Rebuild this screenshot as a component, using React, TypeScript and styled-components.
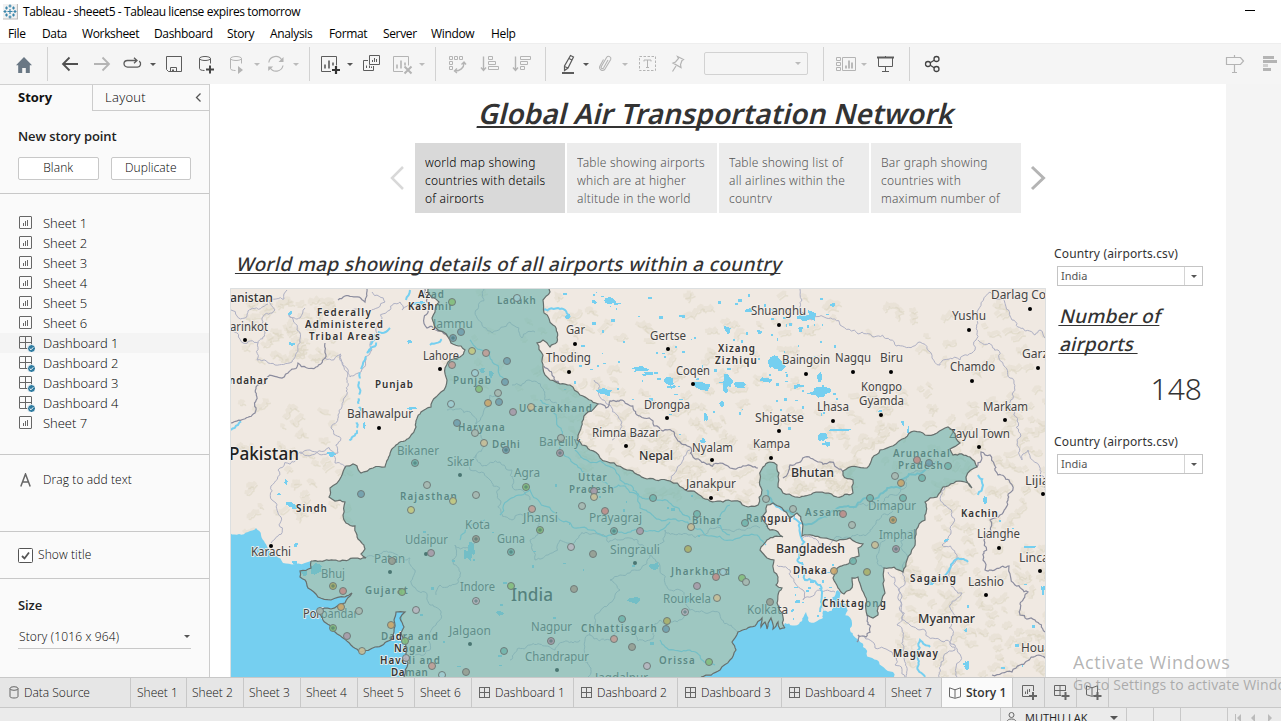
import React from "react";
import styled, { createGlobalStyle, css } from "styled-components";

const Global = createGlobalStyle`
  * { box-sizing: border-box; }
  body { margin: 0; overflow: hidden; background: #fff; font-family: "Noto Sans", "Open Sans", sans-serif; }
  svg { display: block; flex: none; }
`;

const UI = `"Open Sans", "Noto Sans", sans-serif`;

/* ---------- window frame ---------- */
const Frame = styled.div`
  width: 1281px;
  height: 721px;
  display: flex;
  flex-direction: column;
  position: relative;
  overflow: hidden;
  color: #333;
`;
const TitleBar = styled.header`
  height: 24px;
  display: flex;
  align-items: center;
  padding: 0 26px 0 3px;
  gap: 5px;
  font: 12px/24px ${UI};
  letter-spacing: -0.4px;
  color: #000;
`;
const TitleText = styled.span`
  flex: 1;
`;
const Minimize = styled.span`
  width: 10px;
  height: 1px;
  background: #000;
  margin-top: -3px;
`;
const MenuBar = styled.nav`
  height: 19px;
  display: flex;
  padding-left: 8px;
  font: 12px/20px ${UI};
  color: #000;
`;
const MenuItem = styled.span<{ $w: number }>`
  width: ${(p) => p.$w}px;
  white-space: nowrap;
  letter-spacing: -0.35px;
`;
const Toolbar = styled.div`
  height: 41px;
  background: #f5f5f5;
  border-top: 1px solid #eee;
  display: flex;
  align-items: center;
`;
const Tool = styled.svg<{ $gap: number }>`
  margin-left: ${(p) => p.$gap}px;
  overflow: visible;
`;
const Divider = styled.span<{ $gap: number }>`
  width: 1px;
  height: 34px;
  background: #d2d2d2;
  margin-left: ${(p) => p.$gap}px;
`;
const Caret = styled.span<{ $gap?: number; $dim?: boolean; $size?: number }>`
  width: 0;
  height: 0;
  flex: none;
  border: ${(p) => p.$size ?? 3}px solid transparent;
  border-bottom: 0;
  border-top-color: ${(p) => (p.$dim ? "#bbb" : "#555")};
  margin-left: ${(p) => p.$gap ?? 0}px;
`;
const FitSelect = styled.span`
  width: 104px;
  height: 23px;
  margin-left: 20px;
  margin-top: -1px;
  border: 1px solid #d2d2d2;
  border-radius: 2px;
  display: flex;
  align-items: center;
  justify-content: flex-end;
  padding-right: 6px;
`;

/* ---------- side pane ---------- */
const Body = styled.div`
  height: 593px;
  display: flex;
`;
const Side = styled.aside`
  width: 210px;
  background: #fafafa;
  border-right: 1px solid #ccc;
  font-family: ${UI};
  font-weight: 300;
  color: #000;
`;
const SideTabs = styled.div`
  height: 27px;
  display: flex;
  border-top: 1px solid #d0d0d0;
`;
const SideTab = styled.div<{ $active?: boolean }>`
  width: ${(p) => (p.$active ? 92 : 117)}px;
  padding: 0 7px 0 ${(p) => (p.$active ? 18 : 12)}px;
  font-size: 13px;
  line-height: 25px;
  display: flex;
  align-items: center;
  justify-content: space-between;
  ${(p) =>
    p.$active
      ? css`
          font-weight: 700;
          color: #111;
          padding-bottom: 2px;
        `
      : css`
          border-left: 1px solid #ccc;
          border-bottom: 1px solid #ccc;
          letter-spacing: 0.3px;
        `}
`;
const Section = styled.section<{ $h: number; $last?: boolean }>`
  height: ${(p) => p.$h}px;
  border-bottom: ${(p) => (p.$last ? 0 : 1)}px solid #c8c8c8;
`;
const Heading = styled.h3<{ $top: number }>`
  margin: 0;
  padding: ${(p) => p.$top}px 0 0 18px;
  font-size: 13px;
  line-height: 18px;
  letter-spacing: -0.1px;
  font-weight: 600;
  color: #222;
`;
const Buttons = styled.div`
  display: flex;
  gap: 12px;
  padding: 12px 18px 0;
`;
const Button = styled.button`
  width: 81px;
  height: 23px;
  padding: 0 0 1px;
  background: #fff;
  border: 1px solid #c8c8c8;
  border-radius: 2px;
  font: 300 12px/18px ${UI};
  letter-spacing: 0.1px;
  color: #000;
`;
const SheetList = styled.div`
  padding-top: 19px;
`;
const SheetRow = styled.div<{ $hot?: boolean }>`
  height: 20px;
  padding-left: 19px;
  display: flex;
  align-items: center;
  gap: 8px;
  font-size: 13px;
  line-height: 20px;
  letter-spacing: -0.02px;
  background: ${(p) => (p.$hot ? "#f4f4f4" : "transparent")};
`;
const SideRow = styled.div<{ $top: number; $left: number; $gap: number }>`
  display: flex;
  align-items: center;
  padding: ${(p) => p.$top}px 0 0 ${(p) => p.$left}px;
  gap: ${(p) => p.$gap}px;
  font-size: 12px;
  line-height: 18px;
  letter-spacing: 0.1px;
`;
const SizeSelect = styled.div`
  width: 173px;
  height: 25px;
  margin: 10px 0 0 18px;
  padding: 0 1px 0 1px;
  border-bottom: 1px solid #c8c8c8;
  display: flex;
  align-items: center;
  justify-content: space-between;
  font-size: 12px;
  letter-spacing: 0.15px;
`;

/* ---------- story canvas ---------- */
const Story = styled.main`
  width: 1016px;
  background: #fff;
  padding-top: 12px;
  overflow: hidden;
`;
const Gutter = styled.div`
  flex: 1;
  background: #f4f4f4;
`;
const slanted = css`
  transform: skewX(-14deg);
  transform-origin: 0 75%;
  text-decoration: underline;
  text-decoration-skip-ink: none;
  white-space: pre;
`;
const StoryTitle = styled.h1`
  margin: 0 0 0 268px;
  width: 476px;
  height: 34px;
  font: 600 28px/34px "Noto Sans", sans-serif;
  letter-spacing: 0.15px;
  text-decoration-thickness: 2px;
  text-underline-offset: 2px;
  ${slanted}
`;
const Navigator = styled.div`
  height: 70px;
  margin-top: 13px;
  padding-left: 178px;
  display: flex;
  align-items: center;
  gap: 2px;
`;
const Arrow = styled.svg<{ $left: number; $right: number }>`
  margin: 0 ${(p) => p.$right}px 0 ${(p) => p.$left}px;
`;
const Point = styled.div<{ $active?: boolean }>`
  width: 150px;
  height: 70px;
  padding: 11px 8px 0 10px;
  background: ${(p) => (p.$active ? "#d9d9d9" : "#ececec")};
  color: ${(p) => (p.$active ? "#000" : "#555")};
`;
const Caption = styled.div`
  height: 49px;
  overflow: hidden;
  font-size: 12px;
  font-weight: 300;
  line-height: 18px;
  white-space: pre;
  letter-spacing: 0.22px;
`;
const Dash = styled.div`
  display: flex;
  margin-top: 32px;
`;
const MapColumn = styled.div`
  width: 816px;
  margin-left: 20px;
`;
const SheetTitle = styled.h2`
  margin: 0;
  padding: 6px 0 0 4px;
  height: 43px;
  font: 500 19px/26px "Noto Sans", sans-serif;
  letter-spacing: 0.35px;
  text-underline-offset: 2px;
  ${slanted}
`;
const FilterColumn = styled.div`
  width: 180px;
  padding-left: 8px;
`;
const FilterLabel = styled.div`
  font-size: 12px;
  line-height: 18px;
  letter-spacing: 0.15px;
  color: #333;
`;
const FilterBox = styled.div`
  width: 146px;
  height: 20px;
  margin: 3px 0 0 3px;
  border: 1px solid #c4c4c4;
  display: flex;
  align-items: center;
  font-size: 11px;
  color: #555;
  padding-left: 3px;
`;
const FilterValue = styled.span`
  flex: 1;
  line-height: 16px;
`;
const FilterDrop = styled.span`
  width: 18px;
  height: 18px;
  border-left: 1px solid #d4d4d4;
  display: flex;
  align-items: center;
  justify-content: center;
`;
const CountTitle = styled.h2`
  margin: 16px 0 0 5px;
  font: 500 19px/28px "Noto Sans", sans-serif;
  letter-spacing: 0.25px;
`;
const CountLine = styled.span`
  display: block;
  width: max-content;
  text-underline-offset: 2px;
  ${slanted}
`;
const Count = styled.div`
  width: 148px;
  margin-top: 12px;
  text-align: right;
  font: 300 30px/38px "Noto Sans", sans-serif;
  height: 63px;
`;

/* ---------- bottom bars ---------- */
const TabStrip = styled.div`
  height: 31px;
  background: #e6e6e6;
  border-top: 1px solid #c8c8c8;
  border-bottom: 1px solid #c8c8c8;
  display: flex;
  font: 300 12px/29px ${UI};
  color: #111;
`;
const BottomTab = styled.div<{ $w: number; $pad?: number; $active?: boolean }>`
  width: ${(p) => p.$w}px;
  padding-left: ${(p) => p.$pad ?? 7}px;
  border-right: 1px solid #c8c8c8;
  display: flex;
  align-items: center;
  gap: 5px;
  white-space: nowrap;
  background: ${(p) => (p.$active ? "#fafafa" : "transparent")};
  font-weight: ${(p) => (p.$active ? 600 : 300)};
  color: ${(p) => (p.$active ? "#333" : "inherit")};
`;
const Status = styled.footer`
  height: 13px;
  background: #ebebeb;
  display: flex;
  padding-left: 1000px;
  font: 11px/18px ${UI};
  color: #222;
  overflow: hidden;
`;
const StatusCell = styled.div<{ $w: number }>`
  width: ${(p) => p.$w}px;
  border-left: 1px solid #c8c8c8;
  height: 20px;
  display: flex;
  flex: none;
  align-items: center;
  padding-left: 5px;
  gap: 8px;
`;
const Watermark = styled.div`
  position: absolute;
  left: 1073px;
  top: 650px;
  width: 208px;
  overflow: hidden;
  white-space: nowrap;
  color: rgba(130, 130, 130, 0.6);
  font-family: ${UI};
`;
const MarkTitle = styled.div`
  font-size: 18px;
  line-height: 25px;
  letter-spacing: 0.6px;
`;
const MarkText = styled.div`
  font-size: 14px;
  line-height: 20px;
  letter-spacing: 0.15px;
`;

/* ---------- icons ---------- */
const DARK = "#5c5c5c";
const DIM = "#b4b4b4";

const SheetIcon = () => (
  <svg width="16" height="16" viewBox="0 0 16 16" fill="none" stroke="#666">
    <rect x="0.5" y="1.5" width="12" height="12" rx="0.5" />
    <path d="M4.5 11V8M6.5 11V6M8.5 11V5" />
  </svg>
);
const DashIcon = ({ check = false }: { check?: boolean }) => (
  <svg width="16" height="18" viewBox="0 0 16 18" fill="none" stroke="#666">
    <rect x="0.5" y="2.5" width="12" height="12" rx="0.5" />
    <path d="M6.5 2.5v12M0.5 8.5h12" />
    {check && (
      <>
        <circle cx="12.5" cy="14.5" r="4" fill="#2f7ba0" stroke="#fafafa" />
        <path d="M10.7 14.5l1.3 1.3 2.3-2.5" stroke="#fff" />
      </>
    )}
  </svg>
);
const TabDash = () => (
  <svg width="11" height="12" viewBox="0 0 11 12" fill="none" stroke="#666">
    <rect x="0.5" y="0.5" width="10" height="10" />
    <path d="M5.5 0.5v10M0.5 5.5h10" />
  </svg>
);
const Book = ({ plus = false }: { plus?: boolean }) => (
  <svg width={plus ? 17 : 12} height={plus ? 16 : 12} viewBox={plus ? "0 0 17 16" : "0 0 12 12"} fill="none" stroke="#666">
    <path d="M6 11.3L0.5 9.8V0.8L6 2.8L11.5 0.8V9.8ZM6 2.8v8" />
    {plus && <path d="M11.5 7v8M7.5 11h8" strokeWidth="2" />}
  </svg>
);
const Cylinder = ({ color }: { color: string }) => (
  <g fill="none" stroke={color}>
    <ellipse cx="6" cy="6.5" rx="5.5" ry="2" />
    <path d="M0.5 6.5v10c0 1.2 2 2 5 2M11.5 6.5v5" />
  </g>
);
const Bars = ({ color, children }: { color: string; children?: React.ReactNode }) => (
  <g fill="none" stroke={color}>
    <path d="M10 19.5H0.5V4.500h15v9" />
    <path d="M4 16.500v-4M8 16.500V8.500M12 13.500V10.500" strokeWidth="1.6" />
    {children}
  </g>
);

function TopTools() {
  return (
    <Toolbar>
      <Tool $gap={15} width="18" height="24">
        <path d="M1 13.2L9 5l8 8.2h-2.2V21h-4v-5H7.2v5h-4v-7.8z" fill="#697784" />
      </Tool>
      <Divider $gap={14} />
      <Tool $gap={14} width="16" height="24" fill="none" stroke="#505050" strokeWidth="1.800">
        <path d="M7.5 5.5L1 12l6.5 6.5M1 12h15" />
      </Tool>
      <Tool $gap={16} width="16" height="24" fill="none" stroke={DIM} strokeWidth="1.800">
        <path d="M8.5 5.5L15 12l-6.500 6.500M0 12h15" />
      </Tool>
      <Tool $gap={13} width="19" height="24" fill="none" stroke={DARK} strokeWidth="1.300">
        <path d="M13 8.500H4.500a3.500 3.300 0 0 0 0 6.600h10a3.300 3.300 0 0 0 1.700-6M11 5.800l3 2.700-3 2.700" />
      </Tool>
      <Caret $gap={8} />
      <Tool $gap={10} width="16" height="24" fill="none" stroke={DARK}>
        <path d="M0.500 4.500h15v15H2.500l-2-2zM4.500 19v-3.500h6V19" />
        <path d="M7 19.500v-2" strokeWidth="2" />
      </Tool>
      <Tool $gap={17} width="14" height="24">
        <Cylinder color={DARK} />
        <path d="M11 13.500v8M7 17.500h8" stroke="#444" strokeWidth="2" />
      </Tool>
      <Tool $gap={17} width="14" height="24">
        <Cylinder color={DIM} />
        <path d="M8 14l5 4-5 4z" fill={DIM} />
      </Tool>
      <Caret $gap={10} $dim />
      <Tool $gap={7} width="18" height="24" fill="none" stroke={DIM} strokeWidth="1.200">
        <path d="M1.800 10.500a7 7 0 0 1 13-2.500M16 13.500A7 7 0 0 1 3 15.500" />
        <path d="M16.500 5v5h-5zM1.200 19v-4.500h5z" fill={DIM} stroke="none" />
      </Tool>
      <Caret $gap={8} $dim />
      <Divider $gap={10} />
      <Tool $gap={11} width="20" height="24">
        <Bars color={DARK}>
          <path d="M15 14v8M11 18h8" stroke="#333" strokeWidth="2.200" />
        </Bars>
      </Tool>
      <Caret $gap={6} />
      <Tool $gap={10} width="18" height="24" fill="none" stroke={DARK}>
        <path d="M6.500 3.500h10v9h-10zM5 8.500H0.500v10h10V14M3.500 16v-2.500M6.500 16v-2.500M8.500 16v-1.500M9.500 10V8M11.500 10V6M13.500 10V7" />
      </Tool>
      <Tool $gap={12} width="20" height="24">
        <Bars color={DIM}>
          <path d="M11.500 14.500l7 7M18.500 14.500l-7 7" strokeWidth="2" />
        </Bars>
      </Tool>
      <Caret $gap={6} $dim />
      <Divider $gap={10} />
      <Tool $gap={13} width="18" height="24" fill="none" stroke={DIM}>
        <path d="M0.500 4.500h3v3h-3zM5.500 4.500h3v3h-3zM10.500 4.500h3v3h-3zM0.500 9.500h3v3h-3zM0.500 14.500h3v3h-3z" />
        <path d="M6 19c5 0 9-3 9-8M12.500 12.500l2.500-2.500 2 2.500M8 16.500L5.500 19 8 21" strokeWidth="1.400" />
      </Tool>
      <Tool $gap={14} width="18" height="24" fill="none" stroke={DIM}>
        <path d="M2.500 4.500v13M0 15.500l2.500 3 2.500-3" strokeWidth="1.400" />
        <path d="M7.500 4.500h4v3h-4zM7.500 9.500h7v3h-7zM7.500 14.500h10v3h-10z" />
      </Tool>
      <Tool $gap={14} width="18" height="24" fill="none" stroke={DIM}>
        <path d="M2.500 4.500v13M0 15.500l2.500 3 2.500-3" strokeWidth="1.400" />
        <path d="M7.500 4.500h10v3h-10zM7.500 9.500h7v3h-7zM7.500 14.500h4v3h-4z" />
      </Tool>
      <Divider $gap={14} />
      <Tool $gap={16} width="13" height="24" fill="none" stroke={DARK} strokeWidth="1.200">
        <path d="M8.500 3.500l3 1.500-5.500 11L2.500 18.500 2.500 14zM7 6.500l3 1.500M2.500 14.500l3.500 1.500" />
        <path d="M0 21h12" strokeWidth="2" />
      </Tool>
      <Caret $gap={8} />
      <Tool $gap={10} width="13" height="24" fill="none" stroke={DIM} strokeWidth="1.100">
        <path d="M9 8l-4.500 8a1.300 1.300 0 0 1-2.300-1.200l5.500-9.500a2.300 2.300 0 0 1 4 2.200l-6 10a3 3 0 0 1-5-3L4.500 7.500" />
      </Tool>
      <Caret $gap={10} $dim />
      <Tool $gap={11} width="18" height="24" fill="none" stroke={DIM}>
        <rect x="0.500" y="4.500" width="16" height="14" strokeDasharray="2.500 1.500" />
        <path d="M5 9.500V8h7v1.500M8.500 8v8M7 15.500h3" />
      </Tool>
      <Tool $gap={14} width="13" height="24" fill="none" stroke={DIM} strokeWidth="1.200">
        <path d="M6.500 4.500l6 3-1.500 1-1.500 4 .5 3-8-4.500 2.500-1 3-3.500zM5 14l-3.500 5.500" />
      </Tool>
      <FitSelect>
        <Caret $dim $size={3.5} />
      </FitSelect>
      <Divider $gap={15} />
      <Tool $gap={12} width="21" height="24" fill="none" stroke={DIM}>
        <path d="M0.500 5.500h4v3h-4zM0.500 10.500h4v3h-4zM0.500 15.500h4v3h-4zM6.500 5.500h13v13h-13z" />
        <path d="M10 16.500v-3M13 16.500V8.500M16 16.500v-6" strokeWidth="1.800" />
      </Tool>
      <Caret $gap={4} $dim />
      <Tool $gap={10} width="18" height="24" fill="none" stroke={DARK}>
        <path d="M0 5.500h17" strokeWidth="2" />
        <path d="M1.500 6v8.500h14V6M8.500 4v1M8.500 15v4M5 19.500h7" />
      </Tool>
      <Divider $gap={14} />
      <Tool $gap={15} width="16" height="24" fill="none" stroke="#444" strokeWidth="1.300">
        <circle cx="3" cy="12" r="2.500" />
        <circle cx="11.500" cy="7" r="2.500" />
        <circle cx="11.500" cy="17" r="2.500" />
        <path d="M5.200 10.700l4-2.400M5.200 13.300l4 2.400" />
      </Tool>
      <Tool $gap={285} width="19" height="24" fill="none" stroke={DIM} strokeWidth="1.200">
        <path d="M0.500 5.500h14l3 3.500-3 3.500h-14zM8.500 3v2.500M8.500 12.500v8M6 20.500h5" />
      </Tool>
      <Tool $gap={18} width="15" height="24" fill={DIM}>
        <path d="M0 4h11v3H0zM0 8h14v3H0zM0 16h8v3H0z" />
        <path d="M0 12h5v3H0z" fill="#d0d0d0" />
      </Tool>
    </Toolbar>
  );
}

/* ---------- map geometry ---------- */
type Pt = [number, number];
const parse = (s: string): Pt[] => s.trim().split(/\s+/).map((p) => p.split(",").map(Number) as Pt);
const noise = (a: number, b: number) => {
  const v = Math.sin(a * 12.9898 + b * 78.233) * 43758.5453;
  return v - Math.floor(v) - 0.5;
};
function rough(pts: Pt[], amount = 0.3, minLen = 4): Pt[] {
  const out: Pt[] = [pts[0]];
  const split = (a: Pt, b: Pt) => {
    const dx = b[0] - a[0];
    const dy = b[1] - a[1];
    const len = Math.hypot(dx, dy);
    if (len > minLen) {
      const k = noise(a[0] + b[0], a[1] + b[1]) * amount;
      const m: Pt = [(a[0] + b[0]) / 2 - dy * k, (a[1] + b[1]) / 2 + dx * k];
      split(a, m);
      split(m, b);
    } else out.push(b);
  };
  for (let i = 1; i < pts.length; i++) split(pts[i - 1], pts[i]);
  return out;
}
const line = (pts: Pt[]) => "M" + pts.map((p) => `${p[0].toFixed(1)} ${p[1].toFixed(1)}`).join("L");

const northwest = parse(
  "428,289 432,298 439,302 435,312 432,318 436,328 448,337 451,343 461,346 465,350 460,357 448,362 445,368 447,380 441,392 432,402 431,407 421,412 416,427 410,437 396,445 388,459 385,467 373,468 361,473 357,466 353,464 346,466 341,477 330,488 329,497 335,501 345,502 343,515 346,523 355,526 357,535 365,549 361,554 366,558 355,558 338,561 320,561 311,561"
);
const westCoast = parse(
  "311,561 311,568 300,571 300,577 305,580 308,588 318,597 331,600 345,597 352,593 345,603 331,609 318,610 323,620 335,632 353,647 361,652 375,647 391,640 394,632 394,620 396,612 405,612 400,618 404,627 401,633 406,647 405,657 408,663 404,677"
);
const eastCoast = parse(
  "701,677 720,670 730,660 736,650 732,642 738,632 755,626 762,618 761,627 765,622 767,629 771,618 773,629 778,622 780,629 785,628"
);
const northeast = parse(
  "785,628 783,617 777,603 782,588 776,585 778,577 774,572 774,560 767,558 760,550 767,540 783,537 778,532 770,530 767,525 762,517 767,505 773,503 782,508 790,518 797,513 802,522 802,536 823,538 850,538 863,544 858,548 859,556 850,562 835,572 833,578 838,588 844,594 850,590 852,578 858,577 862,590 867,615 873,618 878,615 878,607 885,593 884,568 903,572 907,560 914,547 916,530 925,520 925,502 937,497 943,487 965,482 972,488 966,477 977,467 970,457 953,455 950,449 960,443 948,427 937,433 925,435 914,431 905,438 880,450 867,468 843,471 843,475 853,480 853,493 837,497 813,493 795,497 783,493 778,487 779,473 777,465 770,462 763,467 760,480 762,490 758,505 745,506 723,502 703,498 683,488 670,481 647,479 627,470 600,458 590,450 582,445 577,440 582,422 588,412 598,404 580,395 570,385 560,384 550,380 543,368 543,355 537,343 543,340 550,347 557,342 553,325 544,313 543,300 550,292 549,289"
);
const nwR = rough(northwest);
const wcR = rough(westCoast, 0.2);
const ecR = rough(eastCoast, 0.2);
const neR = rough(northeast);
const indiaPath = line([...nwR, ...wcR, ...ecR, ...neR]) + "Z";
const arabianSea =
  line([...rough(parse("230,533 248,532 256,528 261,535 265,543 269,550 276,556 283,563 295,564 308,562 311,561")), ...wcR, [230, 677]]) + "Z";
const bengalSea =
  line([
    ...ecR,
    ...rough(
      parse("785,628 785,623 800,622 806,612 808,620 823,618 821,606 828,612 833,607 838,590 842,604 847,605 852,623 863,647 877,660 893,672 894,677"),
      0.5,
      3
    ),
  ]) + "Z";

const nationBorders = [
  "231,423 255,413 256,387 288,373 298,363 316,367 325,358 325,343",
  "338,300 365,302 367,289",
  "425,289 427,302 424,318 427,328 448,337",
  "598,404 606,408 610,401 622,400 640,416 654,426 663,431 672,431 678,441 690,447 694,458 705,463 720,463 730,468 745,466 758,468",
  "783,478 790,465 805,457 820,462 843,472",
  "766,527 776,520 790,518",
  "544,366 552,375 560,384",
  "977,467 981,452 990,455 998,475 1009,480 1008,500 1000,515 990,520 984,540 983,560 985,570 1009,566 1015,585 1028,592 1020,615 1035,620 1045,632",
  "867,615 866,637 858,635 857,642",
  "992,675 1012,672 1020,665 1045,658",
].map((s) => line(rough(parse(s), 0.45, 3)));
const stateBorders = [
  "230,330 243,343 258,343 265,333 262,318 275,310 270,300 284,299 287,290",
  "258,343 257,360 275,365 292,362 298,350 297,330 289,315 300,318 305,308",
  "231,310 245,318 252,308 268,304",
  "341,355 348,373 345,397 338,415 331,427 338,453 300,453",
  "328,452 310,450 278,470 276,503 281,517 271,543",
  "325,358 341,354 350,377 361,372 365,357 372,340 378,325 390,310 400,302 402,310 428,305",
  "352,310 370,312 385,302 372,292",
  "328,452 335,463 345,468",
  "800,289 802,300 800,312 812,320 840,325 858,334 890,340 920,342 932,358 940,365 960,360 975,350 976,340 978,310 990,292 1003,298 1012,320 1035,335 1040,330 1045,338",
  "978,340 998,350 1010,378 1014,410 1017,445 1022,460 1028,450 1045,490",
  "945,487 944,505 950,535 942,545 955,553 950,570 955,590 962,593 950,605 955,617 951,640 955,650 941,665 939,677",
  "917,530 903,572 899,590 901,610 910,625 925,630 940,640 955,645 957,677",
  "777,565 790,570 795,583 803,590 803,600 820,590 835,592",
  "888,572 900,600 897,625 903,650 906,677",
  "862,636 875,648 892,652 895,665 905,677",
  "484,289 476,310 482,325 492,333 510,322 522,338 535,332",
  "447,410 470,412 476,425 484,410 490,395 500,397",
  "478,425 483,445 476,455 482,466 500,462 512,470 515,490 530,500",
  "512,385 528,380 542,388 545,400 560,408 576,410",
  "476,455 470,470 490,480 500,500 512,520 530,512 540,520 530,540 535,560 548,555 560,540 575,542 600,535 620,540 640,545 650,555",
  "366,558 390,552 410,558 415,570 412,585 425,592 430,605 440,610 436,625 425,635 430,650 415,655",
  "476,540 455,545 452,560 460,575 440,585 436,595",
  "650,555 640,570 620,575 610,580 620,590 608,605 595,615 590,635 583,655 588,677",
  "650,555 660,570 680,590 690,610 720,615 738,632",
  "655,548 665,530 690,535 710,528 730,530 760,528",
  "590,635 610,640 630,632 650,640 660,620 690,610",
  "510,660 530,645 555,650 580,640",
  "853,508 880,505 905,488 940,460",
  "802,540 850,538 870,530 888,515 905,500",
  "884,568 880,545 890,535 915,530",
  "690,450 680,465 670,481",
  "594,380 610,405 620,430 612,440",
].map((s) => line(rough(parse(s), 0.5, 3)));
const rivers = [
  "380,335 370,350 360,370 359,400 357,433 348,443",
  "390,328 376,332 368,355",
  "406,300 410,290",
  "430,345 445,338",
  "231,430 238,425 243,421",
  "543,310 560,309 570,317",
  "797,560 805,580 820,585 820,612",
  "767,490 773,503 790,512 800,523 797,560",
  "800,523 840,507 870,498 900,488 925,470 940,463",
  "930,647 920,640 917,655 925,677",
  "942,580 955,560 968,562",
  "978,475 983,485 978,495",
].map((s) => line(rough(parse(s), 0.4, 3)));
const streams = [
  "540,400 560,450 600,480 640,508 690,525 730,540 766,545",
  "500,515 530,490 560,520 590,530 640,530 670,522",
  "460,540 470,525 485,520",
  "660,640 690,650 715,665",
  "470,340 490,352 505,380",
  "575,450 620,480 660,500 690,520",
  "730,505 715,520 730,535",
].map((s) => line(rough(parse(s), 0.4, 3)));
const mountains = [
  [240, 300, 330, 360, 60],
  [235, 400, 350, 530, 45],
  [560, 385, 720, 470, 60],
  [640, 440, 770, 500, 60],
  [780, 465, 850, 492, 40],
  [820, 390, 1045, 470, 90],
  [930, 480, 1045, 677, 120],
  [550, 295, 830, 440, 80],
  [895, 560, 915, 660, 25],
  [860, 300, 1045, 390, 35],
  [440, 290, 600, 400, 30],
];
const relief = mountains
  .flatMap(([x0, y0, x1, y1, n], g) =>
    Array.from({ length: n }, (_, i) => {
      const x = x0 + (noise(i, g + 1) + 0.5) * (x1 - x0);
      const y = y0 + (noise(i + 40, g + 7) + 0.5) * (y1 - y0);
      const dx = 4 + (noise(i, g + 3) + 0.5) * 9;
      const dy = (noise(i, g + 9) - 0.2) * 13;
      return line(rough([[x, y], [x + dx, y + dy]], 0.7, 3));
    })
  )
  .join("");

const lakes = [
  [640, 369, 12, 5], [648, 374, 8, 3], [605, 392, 12, 6], [668, 381, 9, 7], [672, 387, 7, 3],
  [703, 386, 14, 7], [728, 381, 8, 10], [725, 388, 5, 7], [740, 385, 13, 4], [611, 301, 10, 5], [594, 302, 4, 3],
  [568, 316, 5, 4], [775, 362, 10, 10], [780, 367, 12, 5], [767, 380, 10, 4], [820, 392, 18, 9], [800, 386, 8, 3],
  [819, 377, 5, 7], [812, 315, 8, 8], [804, 318, 12, 4], [801, 329, 4, 6], [833, 305, 4, 3], [728, 330, 5, 6],
  [749, 310, 6, 4], [760, 332, 5, 3], [822, 438, 8, 7], [826, 444, 6, 4], [838, 430, 22, 2], [903, 423, 3, 4],
  [908, 430, 2, 5], [722, 404, 4, 5], [706, 417, 3, 6], [703, 441, 5, 5], [880, 411, 4, 1.5], [290, 313, 3, 3],
  [292, 344, 5, 3], [286, 482, 3, 6], [290, 504, 6, 4], [295, 507, 7, 4], [296, 545, 3, 4], [332, 454, 8, 4],
  [279, 494, 3, 2], [419, 304, 10, 4], [931, 583, 6, 4], [1043, 590, 3, 7], [1031, 547, 9, 2], [966, 630, 2, 3],
  [967, 665, 4, 8], [985, 500, 3, 6], [946, 540, 4, 3], [364, 426, 2, 6], [412, 408, 8, 3], [410, 342, 4, 3],
  [468, 555, 8, 8], [472, 548, 5, 10], [688, 600, 10, 5], [634, 600, 9, 5], [401, 621, 2, 9], [402, 668, 4, 5],
  [482, 370, 5, 5], [491, 374, 4, 6], [316, 569, 10, 8], [304, 572, 6, 6], [500, 613, 6, 4], [655, 566, 8, 5],
];
const speckZones = [
  [560, 292, 850, 400, 85],
  [770, 300, 800, 410, 20],
  [560, 400, 830, 440, 12],
  [790, 560, 835, 622, 26],
  [400, 480, 700, 670, 36],
  [270, 560, 300, 568, 8],
  [960, 520, 1045, 670, 10],
];
const specks = speckZones.flatMap(([x0, y0, x1, y1, n], g) =>
  Array.from({ length: n }, (_, i) => [
    x0 + (noise(i + 3, g + 21) + 0.5) * (x1 - x0),
    y0 + (noise(i + 11, g + 33) + 0.5) * (y1 - y0),
    1 + (noise(i, g + 50) + 0.5) * 3,
    1 + (noise(i + 5, g + 60) + 0.5) * 2,
  ])
);
const blob = ([x, y, w, h]: number[]) => {
  const pts: Pt[] = Array.from({ length: 11 }, (_, i) => {
    const a = (i / 11) * Math.PI * 2;
    const r = 0.35 + (noise(x + i, y) + 0.5) * 0.5;
    return [x + Math.cos(a) * w * r, y + Math.sin(a) * h * r];
  });
  return line(pts) + "Z";
};
const lakePath = lakes.map(blob).join("");
const speckPath = specks.map(([x, y, w, h]) => `M${x.toFixed(0)} ${y.toFixed(0)}h${w.toFixed(0)}v${h.toFixed(0)}h-${w.toFixed(0)}z`).join("");

/* text, left, baseline, width */
type L = [string, number, number, number];
const cities: L[] = [
  ["arinkot", 230, 331, 38], ["Jammu", 433, 328, 40], ["Lahore", 423, 360, 36],
  ["Bahawalpur", 347, 418, 66], ["Bikaner", 397, 455, 42], ["Sikar", 447, 466, 27], ["Bareilly", 539, 446, 41],
  ["Gar", 566, 334, 19], ["Thoding", 546, 362, 45], ["Gertse", 650, 340, 36], ["Coqen", 676, 375, 34],
  ["Drongpa", 644, 409, 46], ["Rimna Bazar", 592, 437, 68], ["Nyalam", 692, 452, 41], ["Shigatse", 755, 422, 49],
  ["Kampa", 753, 448, 37], ["Shuanghu", 751, 315, 55], ["Baingoin", 782, 364, 48], ["Nagqu", 835, 362, 36],
  ["Biru", 880, 362, 23], ["Kongpo", 861, 391, 41], ["Gyamda", 859, 405, 45], ["Lhasa", 817, 411, 32],
  ["Yushu", 952, 320, 34], ["Darlag County", 991, 299, 80], ["Garzê", 1022, 358, 33], ["Chamdo", 950, 371, 45],
  ["Markam", 983, 411, 45], ["Zayul Town", 949, 438, 61], ["Lijiang", 1025, 485, 40], ["Lianghe", 977, 538, 43],
  ["Lincang", 1019, 562, 45], ["Lashio", 968, 586, 36], ["Houayxay", 1021, 652, 55], ["Janakpur", 686, 488, 50],
  ["Karachi", 251, 556, 40], ["Bhuj", 321, 578, 24], ["Porbandar", 303, 618, 55], ["Patan", 374, 563, 31],
  ["Udaipur", 405, 544, 43], ["Kota", 465, 529, 25], ["Guna", 497, 543, 28], ["Agra", 514, 477, 26],
  ["Jhansi", 523, 522, 35], ["Prayagraj", 589, 522, 53], ["Singrauli", 610, 554, 50], ["Indore", 460, 591, 35],
  ["Jalgaon", 449, 635, 42], ["Nagpur", 531, 631, 41], ["Chandrapur", 525, 661, 64], ["Jagdalpur", 595, 682, 53],
  ["Rourkela", 663, 603, 48], ["Kolkata", 747, 614, 41], ["Dimapur", 868, 510, 48], ["Imphal", 879, 539, 37],
];
const states: L[] = [
  ["Federally", 317, 316, 55], ["Administered", 305, 328, 79], ["Tribal Areas", 309, 340, 72], ["Punjab", 375, 388, 39],
  ["ndahar", 229, 384, 40], ["Azad", 418, 298, 27], ["Kashmir", 408, 310, 46], ["Ladakh", 497, 304, 40],
  ["Punjab", 453, 384, 39], ["Haryana", 458, 431, 48], ["Delhi", 492, 448, 29], ["Uttarakhand", 519, 412, 74],
  ["Xizang", 718, 352, 38], ["Zizhiqu", 715, 364, 43], ["Sindh", 296, 512, 32], ["Rajasthan", 400, 500, 58],
  ["Gujarat", 365, 594, 44], ["Dadra and", 381, 640, 58], ["Nagar", 394, 652, 34], ["Haveli and", 380, 664, 61],
  ["Daman", 391, 676, 38], ["Uttar", 578, 481, 30], ["Pradesh", 569, 493, 46], ["Bihar", 692, 524, 30],
  ["Jharkhand", 671, 575, 60], ["Chhattisgarh", 581, 632, 77], ["Orissa", 659, 664, 37], ["Rangpur", 746, 522, 48],
  ["Assam", 805, 516, 38], ["Arunachal", 893, 457, 58], ["Pradesh", 898, 469, 46], ["Kachin", 961, 517, 38],
  ["Sagaing", 910, 582, 47], ["Magway", 893, 657, 46], ["Dhaka", 793, 574, 35], ["Chittagong", 822, 607, 65],
];
const countries: L[] = [
  ["anistan", 230, 302, 43], ["Nepal", 639, 460, 34], ["Bhutan", 791, 477, 43], ["Bangladesh", 776, 553, 69], ["Myanmar", 918, 623, 57],
];
const townDots = parse(
  "245,340 440,369 379,428 575,344 569,372 668,349 693,384 667,418 626,446 779,431 771,458 712,460 711,498 779,325 806,374 853,372 891,372 881,415 833,421 969,330 1030,309 1038,368 972,381 1005,420 979,447 1043,494 999,548 1040,571 986,595 271,546 460,475 390,572 426,554 635,563 470,644 557,670"
);

const tint: Record<string, string> = {
  g: "#84bd7c", b: "#719ead", t: "#71b4ac", y: "#c2c77f", p: "#bf9c96", l: "#9ecbd0", s: "#a6b7b0",
  o: "#c9a56b", n: "#c7bd97", m: "#a69aa9", w: "#b6b5bf", r: "#bd8d8a", k: "#969d92", v: "#a9ae69",
};
const airports =
  "452,302,g 461,332,b 453,338,b 472,351,y 486,353,p 452,365,p 475,373,l 479,389,g 498,393,s 499,402,b 488,403,o 505,382,b 507,361,b 451,404,l 457,423,b 475,433,s 484,443,n 506,450,b 517,298,l 513,412,m 531,407,n 561,438,s 560,453,m 415,463,t 361,494,b 427,485,s 476,495,s 453,501,y 411,510,y 476,539,k 431,553,m 392,561,k 333,586,v 343,591,r 402,592,g 476,601,w 341,607,o 359,611,s 416,610,w 391,625,o 333,628,g 347,636,m 362,651,n 405,641,g 406,658,w 432,666,p 466,672,k 442,675,l 504,651,t 526,487,g 532,509,p 594,491,m 594,497,n 582,506,s 605,511,r 653,498,t 697,514,t 691,527,n 540,530,g 614,531,t 640,531,m 511,552,t 571,547,w 593,554,k 688,549,v 716,577,r 723,572,l 742,578,g 746,582,s 697,586,m 511,586,g 574,589,k 717,598,n 685,612,w 622,619,t 667,621,v 666,629,b 770,602,k 614,639,p 632,647,k 647,666,w 709,662,g 551,641,m 745,523,t 766,499,s 793,509,s 895,476,s 917,460,r 929,463,b 948,466,t 922,478,t 901,483,o 870,498,t 903,498,t 843,514,r 852,525,s 893,520,o 875,545,n 896,549,m 867,572,v 834,571,o 853,561,t 320,611,s"
    .split(" ")
    .map((s) => s.split(","));
const busy = "506,450 560,453 415,463 476,539 333,586 476,601 333,628 526,487 540,530 614,531 511,552 551,641 685,612 896,549 893,520 453,338";

type Kind = "city" | "state" | "country" | "big";
const Label = styled.text<{ $kind: Kind }>`
  font-family: "Noto Sans", sans-serif;
  paint-order: stroke;
  stroke: rgba(245, 240, 235, 0.85);
  stroke-width: 2px;
  stroke-linejoin: round;
  ${(p) => p.$kind === "city" && "font-size: 12px; fill: #444;"}
  ${(p) => p.$kind === "state" && "font-size: 9.8px; font-weight: 600; fill: #333; letter-spacing: 1.2px;"}
  ${(p) => p.$kind === "country" && "font-size: 12.5px; font-weight: 500; fill: #333;"}
  ${(p) => p.$kind === "big" && "font-size: 17.5px; font-weight: 500; fill: #222;"}
`;
const Labels = ({ items, kind }: { items: L[]; kind: Kind }) => (
  <>
    {items.map(([t, x, y, w], i) => (
      <Label key={i} $kind={kind} x={x} y={y} textLength={w} lengthAdjust={kind === "state" ? "spacing" : "spacingAndGlyphs"}>
        {t}
      </Label>
    ))}
  </>
);

const AirportMap = () => (
  <svg width="816" height="389" viewBox="230 288 816 389">
    <rect x="230" y="288" width="816" height="389" fill="#f0e9e2" />
    <path d={relief} fill="none" stroke="#d9d2bb" strokeWidth="4" opacity="0.28" />
    <path d={relief} fill="none" stroke="#d3ccb4" strokeWidth="1.500" opacity="0.4" transform="translate(2 3)" />
    <path d={arabianSea} fill="#75cff0" />
    <path d={bengalSea} fill="#75cff0" />
    {stateBorders.map((d, i) => (
      <path key={i} d={d} fill="none" stroke="#aeb0c4" />
    ))}
    <g fill="none" stroke="#75cff0">
      {rivers.map((d, i) => (
        <path key={i} d={d} strokeWidth="2" strokeDasharray={i < 5 ? "14 4 6 3" : undefined} />
      ))}
      {streams.map((d, i) => (
        <path key={i} d={d} strokeWidth="1.200" />
      ))}
    </g>
    <path d={lakePath} fill="#75cff0" shapeRendering="crispEdges" />
    <path d={speckPath} fill="#75cff0" shapeRendering="crispEdges" />
    {nationBorders.map((d, i) => (
      <path key={i} d={d} fill="none" stroke="#8b8c9e" strokeWidth="1.200" />
    ))}
    {townDots.map(([x, y], i) => (
      <circle key={i} cx={x} cy={y} r="2" fill="#000" />
    ))}
    <Labels items={states} kind="state" />
    <Labels items={cities} kind="city" />
    <Labels items={countries} kind="country" />
    <Labels items={[["Pakistan", 229, 460, 70], ["India", 511, 601, 42]]} kind="big" />
    <path d={indiaPath} fill="#72b5af" fillOpacity="0.65" />
    <path d={line(nwR) + line([...wcR])} fill="none" stroke="#666f6d" strokeWidth="1.200" />
    <path d={line(ecR) + line(neR)} fill="none" stroke="#666f6d" strokeWidth="1.200" />
    {airports.map(([x, y, c], i) => (
      <circle key={i} cx={x} cy={y} r="3.500" fill={tint[c]} fillOpacity="0.9" stroke="#6f7d7b" />
    ))}
    {parse(busy).map(([x, y], i) => (
      <circle key={i} cx={x} cy={y} r="1.800" fill="#3f6b6b" opacity="0.55" />
    ))}
    <path d="M230.500 677V288.500H1045.500V677" fill="none" stroke="#dcdfe0" />
  </svg>
);

const Filter = () => (
  <>
    <FilterLabel>Country (airports.csv)</FilterLabel>
    <FilterBox>
      <FilterValue>India</FilterValue>
      <FilterDrop>
        <Caret $size={3.5} />
      </FilterDrop>
    </FilterBox>
  </>
);

const sheets = ["Sheet 1", "Sheet 2", "Sheet 3", "Sheet 4", "Sheet 5", "Sheet 6", "Dashboard 1", "Dashboard 2", "Dashboard 3", "Dashboard 4", "Sheet 7"];
const points = [
  "world map showing\ncountries with details\nof airports",
  "Table showing airports\nwhich are at higher\naltitude in the world",
  "Table showing list of\nall airlines within the\ncountry",
  "Bar graph showing\ncountries with\nmaximum number of",
];
const menus: [string, number][] = [
  ["File", 34], ["Data", 40], ["Worksheet", 72], ["Dashboard", 73], ["Story", 43], ["Analysis", 59],
  ["Format", 54], ["Server", 48], ["Window", 60], ["Help", 40],
];
const bottom: [string, number][] = [
  ["Sheet 1", 56], ["Sheet 2", 57], ["Sheet 3", 57], ["Sheet 4", 57], ["Sheet 5", 57], ["Sheet 6", 57],
  ["Dashboard 1", 102], ["Dashboard 2", 104], ["Dashboard 3", 104], ["Dashboard 4", 104], ["Sheet 7", 56],
];

export default function App() {
  return (
    <Frame>
      <Global />
      <TitleBar>
        <svg width="15" height="16" viewBox="0 0 15 16" stroke="#3a86ab" strokeWidth="1.200">
          <rect x="0" y="0" width="15" height="15" fill="#f1f1f1" stroke="none" />
          <path d="M0 15h14.500V0" stroke="#bbb" fill="none" />
          <path d="M7 5v5M4.500 7.500h5M7 0.500v3M5.500 2h3M7 11.500v3M5.500 13h3M2 6v3M0.500 7.500h3M12 6v3M10.500 7.500h3M3.500 2.500v3M2 4h3M10.500 2.500v3M9 4h3M3.500 9.500v3M2 11h3M10.500 9.500v3M9 11h3" />
        </svg>
        <TitleText>Tableau - sheeet5 - Tableau license expires tomorrow</TitleText>
        <Minimize />
      </TitleBar>
      <MenuBar>
        {menus.map(([m, w]) => (
          <MenuItem key={m} $w={w}>
            {m}
          </MenuItem>
        ))}
      </MenuBar>
      <TopTools />
      <Body>
        <Side>
          <SideTabs>
            <SideTab $active>Story</SideTab>
            <SideTab>
              Layout
              <svg width="7" height="10" fill="none" stroke="#555" strokeWidth="1.300">
                <path d="M5.500 0.500L1.500 4.500l4 4" />
              </svg>
            </SideTab>
          </SideTabs>
          <Section $h={83}>
            <Heading $top={16}>New story point</Heading>
            <Buttons>
              <Button>Blank</Button>
              <Button>Duplicate</Button>
            </Buttons>
          </Section>
          <Section $h={261}>
            <SheetList>
              {sheets.map((s) => (
                <SheetRow key={s} $hot={s === "Dashboard 1"}>
                  {s[0] === "S" ? <SheetIcon /> : <DashIcon check />}
                  {s}
                </SheetRow>
              ))}
            </SheetList>
          </Section>
          <Section $h={77}>
            <SideRow $top={16} $left={20} $gap={11}>
              <svg width="12" height="14" fill="none" stroke="#666" strokeWidth="1.500">
                <path d="M0.800 13.500L5.500 1l4.700 12.500M2.500 9h6" />
              </svg>
              Drag to add text
            </SideRow>
          </Section>
          <Section $h={47}>
            <SideRow $top={14} $left={18} $gap={5}>
              <svg width="15" height="15" fill="none" stroke="#555">
                <rect x="0.500" y="0.500" width="14" height="14" rx="1" fill="#fff" />
                <path d="M4 8l2.500 2.500L11 4.500" strokeWidth="1.800" />
              </svg>
              Show title
            </SideRow>
          </Section>
          <Section $h={98} $last>
            <Heading $top={17}>Size</Heading>
            <SizeSelect>
              Story (1016 x 964)
              <Caret $size={3.5} />
            </SizeSelect>
          </Section>
        </Side>
        <Story>
          <StoryTitle>Global Air Transportation Network</StoryTitle>
          <Navigator>
            <Arrow $left={1} $right={9} width="15" height="26" fill="none" stroke="#d8d8d8" strokeWidth="2.500">
              <path d="M14 2L3 13l11 11" />
            </Arrow>
            {points.map((p, i) => (
              <Point key={p} $active={i === 0}>
                <Caption>{p}</Caption>
              </Point>
            ))}
            <Arrow $left={7} $right={0} width="16" height="26" fill="none" stroke="#b4b4b4" strokeWidth="3">
              <path d="M2 2l11.500 11L2 24" />
            </Arrow>
          </Navigator>
          <Dash>
            <MapColumn>
              <SheetTitle>World map showing details of all airports within a country</SheetTitle>
              <AirportMap />
            </MapColumn>
            <FilterColumn>
              <Filter />
              <CountTitle>
                <CountLine>Number of</CountLine>
                <CountLine>{"airports "}</CountLine>
              </CountTitle>
              <Count>148</Count>
              <Filter />
            </FilterColumn>
          </Dash>
        </Story>
        <Gutter />
      </Body>
      <TabStrip>
        <BottomTab $w={131} $pad={9}>
          <svg width="10" height="13" fill="none" stroke="#666">
            <ellipse cx="5" cy="2.500" rx="4" ry="1.800" />
            <path d="M1 2.500v8c0 1 2 1.500 4 1.500s4-.5 4-1.500v-8" />
          </svg>
          Data Source
        </BottomTab>
        {bottom.map(([t, w], i) => (
          <BottomTab key={t} $w={w} $pad={w > 60 ? 7 : i === 0 ? 6 : 5}>
            {w > 60 && <TabDash />}
            {t}
          </BottomTab>
        ))}
        <BottomTab $w={71} $pad={7} $active>
          <Book />
          Story 1
        </BottomTab>
        <BottomTab $w={32} $pad={9}>
          <svg width="16" height="16" fill="none" stroke="#666">
            <path d="M7 11.500H0.500v-11h11V6M3.500 9V6.500M5.500 9V4.500M7.500 7V4" />
            <path d="M11 7v8M7 11h8" strokeWidth="2" />
          </svg>
        </BottomTab>
        <BottomTab $w={32} $pad={9}>
          <svg width="16" height="16" fill="none" stroke="#666">
            <path d="M7 10.500H0.500v-10h11V6M6 0.500v10M0.500 5.500h11" />
            <path d="M11.500 7v8M7.500 11h8" strokeWidth="2" />
          </svg>
        </BottomTab>
        <BottomTab $w={32} $pad={9}>
          <Book plus />
        </BottomTab>
      </TabStrip>
      <Status>
        <StatusCell $w={126}>
          <svg width="11" height="14" fill="none" stroke="#666">
            <circle cx="5.500" cy="4" r="2.500" />
            <path d="M1 13v-2c0-2 2-3 4.500-3s4.500 1 4.500 3v2" />
          </svg>
          MUTHU LAK
          <Caret $gap={15} $size={4} />
        </StatusCell>
        <StatusCell $w={27} />
        <StatusCell $w={27} />
        <StatusCell $w={47} />
        <StatusCell $w={54}>
          <svg width="45" height="10" fill="#bbb">
            <path d="M2 1h1v8H2zM8 1v8L4 5zM22 1v8L18 5zM35 1v8l4-4z" />
          </svg>
        </StatusCell>
      </Status>
      <Watermark>
        <MarkTitle>Activate Windows</MarkTitle>
        <MarkText>Go to Settings to activate Windows.</MarkText>
      </Watermark>
    </Frame>
  );
}
